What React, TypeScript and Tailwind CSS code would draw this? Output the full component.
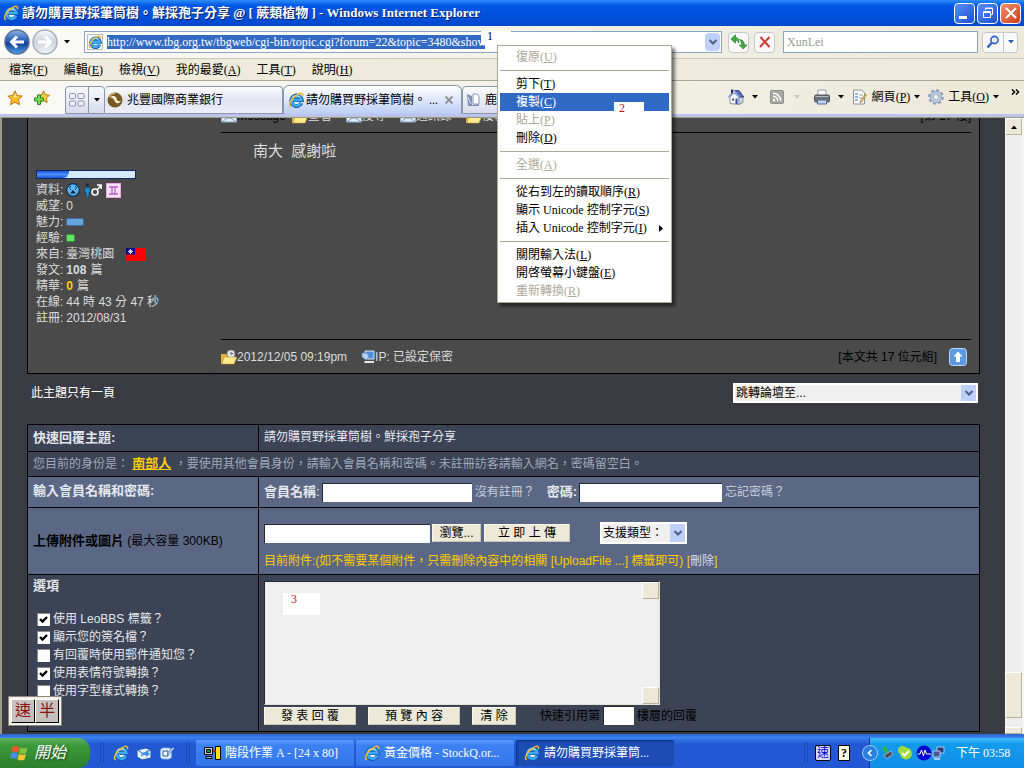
import type { ReactNode } from 'react'
import clsx from 'clsx'

const serif = "font-['Liberation_Serif','Noto_Sans_CJK_TC',serif]"
const sans = "font-['Liberation_Sans','Noto_Sans_CJK_TC',sans-serif]"

/* ---------- icons ---------- */

function IeIcon({ className = 'w-4 h-4' }: { className?: string }) {
  return (
    <svg viewBox="0 0 16 16" className={clsx('shrink-0', className)} fill="none">
      <circle cx="8.300" cy="8.500" r="4" fill="#e9f6ff" />
      <path d="M13.300 11a5.200 5.200 0 1 1 .4-3H4" stroke="#135aa8" strokeWidth="4" />
      <path d="M13 10.800a5 5 0 1 1 .4-2.800H4" stroke="#3fa9f2" strokeWidth="2.600" />
      <path d="M4.500 5.500C6 3.800 9.500 3 11.500 5" stroke="#a5e0ff" strokeWidth="1.200" />
      <path d="M3 14.800C-.8 14 3 6.500 9 2.800c3.600-2.200 6.600-2 5.400 1.400" stroke="#f5b92e" strokeWidth="1.500" />
    </svg>
  )
}

function DownArrow({ className = 'text-black' }: { className?: string }) {
  return (
    <svg viewBox="0 0 6 4" className={clsx('w-1.5 h-1 shrink-0', className)}>
      <path d="M0 0h6L3 3.500z" fill="currentColor" />
    </svg>
  )
}

function Chevron() {
  return (
    <svg viewBox="0 0 10 8" className="w-2.5 h-2" fill="none">
      <path d="M1.500 2 5 5.500 8.500 2" stroke="#4d6185" strokeWidth="2" />
    </svg>
  )
}

function NavIcon({ forward = false }: { forward?: boolean }) {
  return (
    <svg viewBox="0 0 26 26" className="w-[26px] h-[26px]">
      <defs>
        <linearGradient id="navBlue" x1="0" y1="0" x2="0" y2="1">
          <stop offset="0" stopColor="#8fb4e6" />
          <stop offset=".45" stopColor="#2a5db4" />
          <stop offset=".55" stopColor="#123d90" />
          <stop offset="1" stopColor="#4fa3ea" />
        </linearGradient>
        <linearGradient id="navGray" x1="0" y1="0" x2="0" y2="1">
          <stop offset="0" stopColor="#f7f8fa" />
          <stop offset=".5" stopColor="#cdd2da" />
          <stop offset="1" stopColor="#f3f5f8" />
        </linearGradient>
      </defs>
      <circle cx="13" cy="13" r="12" fill={forward ? 'url(#navGray)' : 'url(#navBlue)'} stroke={forward ? '#a9afb9' : '#5b6f96'} strokeWidth="1.500" />
      {forward
        ? <path d="M6 13h12M13 7.500l5.500 5.500-5.500 5.500" stroke="#fff" strokeWidth="3" fill="none" />
        : <path d="M20 13H8M13 7.500 7.500 13l5.500 5.500" stroke="#fff" strokeWidth="3" fill="none" />}
    </svg>
  )
}

function StarIcon() {
  return (
    <svg viewBox="0 0 16 16" className="w-4 h-4">
      <path d="m8 .8 2.200 4.700 5 .6-3.700 3.500 1 5.200L8 12.200l-4.500 2.600 1-5.200L.8 6.100l5-.6z" fill="#fbb92c" stroke="#c07a12" />
      <path d="m8 3 1.200 3.300 3 .4-5.700 1z" fill="#ffe48a" />
    </svg>
  )
}

function AddStarIcon() {
  return (
    <svg viewBox="0 0 16 16" className="w-4 h-4">
      <path d="m9.500.8 1.900 3.900 4 .5-3 3 .8 4.300-3.700-2-3.800 2 .9-4.300-2.800-3 4-.5z" fill="#fbc93c" stroke="#c07a12" />
      <path d="M3.500 5h3v3h3v3h-3v3.500h-3V11h-3V8h3z" fill="#7ddb5a" stroke="#238a1b" />
    </svg>
  )
}

function TabsIcon() {
  return (
    <svg viewBox="0 0 16 14" className="w-4 h-3.5" fill="#eef0fb" stroke="#8e93a8">
      <rect x=".5" y=".5" width="6" height="5" rx="1" />
      <rect x="9" y=".5" width="6" height="5" rx="1" />
      <rect x=".5" y="8" width="6" height="5" rx="1" />
      <rect x="9" y="8" width="6" height="5" rx="1" />
    </svg>
  )
}

function BankIcon() {
  return (
    <svg viewBox="0 0 16 16" className="w-4 h-4 shrink-0">
      <circle cx="8" cy="8" r="7.500" fill="#7a5a22" />
      <path d="M3 5.500C6 3 9 4 9.500 6.500S12 10 14 8.500c-1 3.500-5 3.500-6 1S5.500 5.500 3 5.500z" fill="#f8f0dc" />
      <path d="M2 5A7 7 0 0 1 8 1.200" stroke="#d8b465" strokeWidth="1.500" fill="none" />
    </svg>
  )
}

function NoteIcon() {
  return (
    <svg viewBox="0 0 16 16" className="w-4 h-4 shrink-0">
      <path d="M2 2l5 2v9l7-1v2H3z" fill="#7d90b5" />
      <path d="M8 2h4l2 2v8H8z" fill="#fff" stroke="#8a97b8" />
      <path d="M3 5l3 7" stroke="#dfe6f5" />
    </svg>
  )
}

function HomeIcon() {
  return (
    <svg viewBox="0 0 16 16" className="w-4 h-4">
      <path d="M2 8v6.500l9 1V8L6 4z" fill="#f4f6fb" stroke="#6f7b98" strokeWidth=".8" />
      <path d="M11 8h4v5.500l-4 2z" fill="#cdd6ee" stroke="#6f7b98" strokeWidth=".8" />
      <path d="M6 1.500h5L15.800 8h-4.600z" fill="#5a6fc0" stroke="#26346f" strokeWidth=".8" />
      <path d="M.5 8.500 6 1.500l5.500 7" stroke="#8fa3da" strokeWidth="1.600" fill="none" />
      <path d="M3 .5h2v3l-2 1.500z" fill="#2b2f58" />
      <path d="M4 9.500h2v2H4zM7.500 9.500h2v5.500h-2z" fill="#35489a" />
    </svg>
  )
}

function FeedIcon() {
  return (
    <svg viewBox="0 0 14 14" className="w-3.5 h-3.5" fill="none">
      <rect x=".5" y=".5" width="13" height="13" rx="1" fill="#a8a8a2" stroke="#92928c" />
      <circle cx="4" cy="10" r="1.300" fill="#fff" />
      <path d="M3 6.200A4.800 4.800 0 0 1 7.800 11M3 3.200A7.800 7.800 0 0 1 10.800 11" stroke="#fff" strokeWidth="1.400" />
    </svg>
  )
}

function PrinterIcon() {
  return (
    <svg viewBox="0 0 16 16" className="w-4 h-4">
      <path d="M4 1h8v6H4z" fill="#fff" stroke="#9a9ea8" />
      <rect x=".5" y="6" width="15" height="7" rx="1.500" fill="#6d717a" stroke="#4b4e58" />
      <path d="M1.500 7.500h13" stroke="#b5b9c2" />
      <path d="M3.500 11h9v4h-9z" fill="#bcd5f5" stroke="#5a6a88" />
    </svg>
  )
}

function PageIcon() {
  return (
    <svg viewBox="0 0 16 16" className="w-4 h-4">
      <path d="M1.500 1h8l3 3v11h-11z" fill="#fff" stroke="#8a8f9c" />
      <path d="M3 5h3M3 8h3M3 11h3" stroke="#6a9bd8" strokeWidth="1.500" />
      <path d="M7 6h4M7 9h3" stroke="#999" />
      <path d="m14.500 6-5 7-1.500 1 .3-2 5-7z" fill="#f1c75c" stroke="#7d6330" strokeWidth=".6" />
    </svg>
  )
}

function GearIcon() {
  return (
    <svg viewBox="0 0 16 16" className="w-4 h-4" fill="none">
      <circle cx="8" cy="8" r="6.800" stroke="#8ba0bb" strokeWidth="2" strokeDasharray="3 2.340" />
      <circle cx="8" cy="8" r="4.500" stroke="#b7c9de" strokeWidth="3" />
      <circle cx="8" cy="8" r="5.800" stroke="#8298b6" strokeWidth=".7" />
      <circle cx="8" cy="8" r="2.600" fill="#f4f3ea" stroke="#8298b6" strokeWidth=".7" />
    </svg>
  )
}

function RefreshIcon() {
  return (
    <svg viewBox="0 0 16 16" className="w-4 h-4">
      <path d="M0 5 4.500.8V3.500C7 3.500 8 5 7.800 9c-.6-2-1.500-2.500-3.300-2.500v2.700z" fill="#3fae3f" stroke="#1f7d25" strokeWidth=".7" />
      <path d="M8.500 11h2.300C10.800 8.500 10 7 8.600 5.500c3 .5 4.700 2 4.700 5.500H16l-3.800 4z" fill="#3fae3f" stroke="#1f7d25" strokeWidth=".7" />
    </svg>
  )
}

function PersonIcon() {
  return (
    <svg viewBox="0 0 18 14" className="w-[18px] h-3.5" fill="none">
      <circle cx="3.500" cy="2" r="1.700" fill="#20262e" />
      <path d="M.8 4.500h5.400v5H5V14H2V9.500H.8z" fill="#1f8bd0" stroke="#0c3557" strokeWidth=".6" />
      <circle cx="11" cy="9" r="3" stroke="#fff" strokeWidth="1.600" />
      <path d="m13 7 4-4.500M13 2h4.200v4" stroke="#fff" strokeWidth="1.500" />
    </svg>
  )
}

function MoodIcon() {
  return (
    <svg viewBox="0 0 14 14" className="w-3.5 h-3.5">
      <circle cx="7" cy="7" r="6.300" fill="#5ab6f2" stroke="#0c2f55" strokeWidth="1.200" />
      <path d="M4 10.500 7 7l3 3.500z" fill="#0c2035" />
      <path d="m3 5 2-1.500M11 5 9 3.500M4 6.500h1M9 6.500h1" stroke="#0c2035" />
    </svg>
  )
}

function GeminiIcon() {
  return (
    <svg viewBox="0 0 15 15" className="w-[15px] h-[15px]">
      <rect x=".5" y=".5" width="14" height="14" fill="#fbe4fb" stroke="#f3a6ee" />
      <path d="M3 4h9M3 11h9M6 4v7M9 4v7" stroke="#b85bc4" strokeWidth="1.300" />
    </svg>
  )
}

function FlagIcon() {
  return (
    <svg viewBox="0 0 20 13" className="w-5 h-[13px]">
      <path d="M0 0h20v13H0z" fill="#f00" />
      <path d="M0 0h9v6.500H0z" fill="#000a8c" />
      <path d="M4.500 1v5M2 3.500h5M2.800 1.800l3.400 3.400M6.200 1.800 2.800 5.200" stroke="#fff" strokeWidth=".8" />
    </svg>
  )
}

function FolderIcon() {
  return (
    <svg viewBox="0 0 16 16" className="w-4 h-4 shrink-0">
      <path d="M0 5h5l1 1h7v9H0z" fill="#e0b23f" />
      <circle cx="10" cy="5" r="4" fill="#dfe4ea" stroke="#8f97a2" />
      <path d="M10 3v2.300l2-1" stroke="#555" fill="none" />
      <path d="M3 8h13l-3 7H1z" fill="#fde98e" stroke="#c9992a" strokeWidth=".6" />
    </svg>
  )
}

function ComputerIcon() {
  return (
    <svg viewBox="0 0 14 14" className="w-3.5 h-3.5 shrink-0">
      <path d="M4 1h9v8H4z" fill="#4d8fe0" stroke="#dce8f7" />
      <path d="M1 3h5l2 4-3 3-4-3z" fill="#b8d4f4" stroke="#5b7fae" strokeWidth=".7" />
      <path d="M4 11h9v2H3z" fill="#e2e5ea" />
    </svg>
  )
}

// letter-style icon of the post toolbar
function CardIcon() {
  return (
    <svg viewBox="0 0 16 16" className="w-4 h-4 shrink-0">
      <path d="M.5 5h15v9H.5z" fill="#e3ecf8" stroke="#8fa9cf" />
      <path d="m1 14 5-4h4l5 4" stroke="#6d8fc4" fill="none" />
    </svg>
  )
}

function UpIcon() {
  return (
    <svg viewBox="0 0 18 18" className="w-[18px] h-[18px]">
      <rect x=".5" y=".5" width="17" height="17" rx="3" fill="#5b9ae0" stroke="#b9d6f6" />
      <path d="m9 3.500 4.500 5h-2.500V14H7V8.500H4.500z" fill="#fff" />
    </svg>
  )
}

function WindowsFlag() {
  return (
    <svg viewBox="0 0 20 18" className="w-5 h-[18px]">
      <path d="M2.500 3C5 1.500 7 1.800 9.300 3L8 8.500C5.800 7.300 3.500 7.200 1.200 8.500z" fill="#ef5a28" />
      <path d="M10.300 3.400c2.500 1.200 4.700 1.200 7.200 0l-1.400 5.500c-2.400 1.200-4.600 1.200-7.100 0z" fill="#84c341" />
      <path d="M1 9.500c2.400-1.300 4.500-1.200 6.800 0L6.500 15c-2.300-1.200-4.400-1.200-6.500 0z" fill="#4a8df0" />
      <path d="M8.800 9.900c2.400 1.200 4.700 1.200 7.100 0l-1.400 5.500c-2.500 1.200-4.600 1.200-7 0z" fill="#fbc62d" />
    </svg>
  )
}

function MailIcon() {
  return (
    <svg viewBox="0 0 16 16" className="w-4 h-4">
      <path d="m1 5 9-2 5 2v8l-9 2-5-3z" fill="#e8f1fb" stroke="#1c57ae" />
      <path d="m2 5 5 4 7-4" stroke="#1c57ae" fill="none" />
      <path d="M5 12c0-4 2-5 5-5V5l4 4-4 3v-2c-2 0-4 0-5 2z" fill="#3f93e8" />
    </svg>
  )
}

function DesktopIcon() {
  return (
    <svg viewBox="0 0 16 16" className="w-4 h-4">
      <rect x="1.500" y="3" width="11" height="11" rx="3" fill="#e8f1fb" stroke="#7eb4ea" />
      <path d="M4 6h5v5H4z" fill="#fff" stroke="#1c57ae" />
      <path d="m8 9 6-7 1.500 1.500-6 6.500z" fill="#cfd9e8" stroke="#1c57ae" strokeWidth=".7" />
    </svg>
  )
}

function TerminalIcon() {
  return (
    <svg viewBox="0 0 17 14" className="w-[17px] h-3.5 shrink-0">
      <path d="M.5 1.500h8v7h-8z" fill="#d8d8d8" stroke="#000" />
      <path d="M2.500 3.500h4v3h-4z" fill="#0a9a3a" stroke="#000" />
      <path d="M2 10.500h6v2H2z" fill="#bbb" stroke="#000" />
      <path d="M11.500.5h5v13h-5z" fill="#ffe100" stroke="#000" />
      <path d="M9 5h3" stroke="#e00" strokeWidth="1.500" />
    </svg>
  )
}

/* ---------- browser chrome ---------- */

function TitleBar() {
  return (
    <header className="flex h-[26px] shrink-0 items-center gap-[3px] bg-linear-to-b from-[#2f8dfb] via-[#0058e6] via-20% to-[#0048cf] px-[3px]">
      <IeIcon />
      <h1 className="flex-1 truncate text-[13px] leading-5 font-bold text-white [text-shadow:1px_1px_#0a1f66]">
        請勿購買野採筆筒樹。鮮採孢子分享 @ [ 蕨類植物 ] - Windows Internet Explorer
      </h1>
      <div className="flex gap-0.5">
        <button aria-label="最小化" className="flex h-[21px] w-[21px] items-end rounded-sm border border-white bg-linear-to-br from-[#5b8cf5] to-[#1a4fd4] p-1">
          <span className="h-[3px] w-2 bg-white" />
        </button>
        <button aria-label="還原" className="flex h-[21px] w-[21px] items-center justify-center rounded-sm border border-white bg-linear-to-br from-[#5b8cf5] to-[#1a4fd4]">
          <svg viewBox="0 0 12 12" className="w-3 h-3" fill="none" stroke="#fff">
            <path d="M3.500 3V1.500h7v6H9M3.500 1h7" />
            <path d="M1.500 4.500h7v6h-7zM1.500 5.500h7" />
          </svg>
        </button>
        <button aria-label="關閉" className="flex h-[21px] w-[21px] items-center justify-center rounded-sm border border-white bg-linear-to-br from-[#f09070] to-[#cc3a10]">
          <svg viewBox="0 0 12 12" className="w-3 h-3"><path d="m1 1 10 10M11 1 1 11" stroke="#fff" strokeWidth="2" /></svg>
        </button>
      </div>
    </header>
  )
}

function ToolButton({ label, children, className = 'w-[21px] rounded-sm' }: { label: string; children: ReactNode; className?: string }) {
  return (
    <button aria-label={label} className={clsx('flex h-[21px] items-center justify-center border border-[#c3c6cf] bg-[#f9f9f8]', className)}>
      {children}
    </button>
  )
}

function NavRow() {
  return (
    <div className="flex h-8 shrink-0 items-center bg-linear-to-r from-[#fafaf8] to-[#ece9d8] pr-1.5 pl-1">
      <button aria-label="上一頁"><NavIcon /></button>
      <button aria-label="下一頁" className="ml-0.5"><NavIcon forward /></button>
      <button aria-label="最近的網頁" className="mr-3.5 ml-1.5"><DownArrow className="text-black" /></button>
      <div className="flex h-[22px] flex-1 items-center border border-[#8ba3c4] bg-white pr-px pl-0.5">
        <span className="mr-1 flex h-4 w-4 items-center justify-center border border-[#bbb] bg-white">
          <IeIcon className="w-3.5 h-3.5" />
        </span>
        <input
          aria-label="網址"
          className="h-3.5 w-[378px] bg-[#316ac5] text-xs leading-3.5 text-white outline-none"
          defaultValue="http://www.tbg.org.tw/tbgweb/cgi-bin/topic.cgi?forum=22&topic=3480&show=0"
        />
        <button aria-label="顯示網址清單" className="ml-auto flex h-[18px] w-[15px] items-center justify-center rounded-sm bg-[#bfd0f8]">
          <Chevron />
        </button>
      </div>
      <div className="mx-1.5 flex gap-[5px]">
        <ToolButton label="重新整理"><RefreshIcon /></ToolButton>
        <ToolButton label="停止">
          <svg viewBox="0 0 12 12" className="w-3 h-3"><path d="m1.500 1 9 10M10.500 1 1 11" stroke="#cc3a33" strokeWidth="2" /></svg>
        </ToolButton>
      </div>
      <input
        aria-label="搜尋"
        placeholder="XunLei"
        className="ml-0.5 h-[22px] w-[195px] border border-[#8ba3c4] bg-white px-[3px] text-xs text-gray-500 outline-none placeholder:text-[#999]"
      />
      <div className="ml-1 flex">
        <ToolButton label="搜尋" className="w-[22px] rounded-l-sm">
          <svg viewBox="0 0 14 14" className="w-3.5 h-3.5" fill="none">
            <path d="m1.500 12.500 4-4.500" stroke="#2b5fc0" strokeWidth="2.500" />
            <circle cx="8.500" cy="5" r="3.600" fill="#e6f0ff" stroke="#2b5fc0" strokeWidth="1.600" />
          </svg>
        </ToolButton>
        <ToolButton label="搜尋選項" className="w-3.5 rounded-r-sm border-l-0"><DownArrow className="text-[#2b5fc0]" /></ToolButton>
      </div>
    </div>
  )
}

// "檔案(F)" with the access key underlined
function KeyLabel({ text, k }: { text: string; k: string }) {
  return <>{text}(<u>{k}</u>)</>
}

const menus = [
  ['檔案', 'F'],
  ['編輯', 'E'],
  ['檢視', 'V'],
  ['我的最愛', 'A'],
  ['工具', 'T'],
  ['說明', 'H'],
]

function MenuRow() {
  return (
    <nav className="flex h-[23px] shrink-0 items-center gap-4 border-t border-b border-t-[#c9c7b8] border-b-[#aaa897] bg-[#eeebdd] px-[9px] text-xs leading-4">
      {menus.map(([text, k]) => (
        <button key={k}><KeyLabel text={text} k={k} /></button>
      ))}
    </nav>
  )
}

function TabRow() {
  return (
    <div className="flex h-[37px] shrink-0 items-start justify-between border-b border-[#9a9a78] bg-linear-to-r from-[#f9f9f6] to-[#ece9d8] text-xs leading-4 shadow-[inset_0_-3px_#bcc4ee]">
      <div className="flex items-end">
        <button aria-label="我的最愛" className="ml-[7px] self-center"><StarIcon /></button>
        <button aria-label="加到我的最愛" className="mr-[15px] ml-[11px] self-center"><AddStarIcon /></button>
        <div className="mt-[5px] flex h-7 rounded-t border border-[#8f95a8] bg-linear-to-b from-[#f8f8fb] to-[#d9dced]">
          <button aria-label="快速索引標籤" className="flex w-[22px] items-center justify-center"><TabsIcon /></button>
          <button aria-label="索引標籤清單" className="flex w-4 items-center justify-center border-l border-[#8f95a8]"><DownArrow /></button>
        </div>
        <button className="flex h-7 w-[178px] items-center gap-1 rounded-t border border-l-0 border-[#8f95a8] bg-linear-to-b from-[#fcfcfd] via-[#e2e4f0] to-[#eceef8] pl-0.5">
          <BankIcon />兆豐國際商業銀行
        </button>
        <div className="flex h-[29px] w-[179px] items-center gap-0.5 rounded-t-md border border-b-0 border-[#8f95a8] bg-linear-to-b from-white to-[#bccdf5] px-1">
          <IeIcon />
          <button className="flex-1 truncate text-left">請勿購買野採筆筒樹。 ...</button>
          <button aria-label="關閉索引標籤" className="p-1">
            <svg viewBox="0 0 8 8" className="w-2 h-2"><path d="m.5.5 7 7M7.500.5l-7 7" stroke="#8b8b8b" strokeWidth="1.800" /></svg>
          </button>
        </div>
        <button className="flex h-7 w-20 items-center gap-1 rounded-t border border-[#8f95a8] bg-linear-to-b from-[#fcfcfd] to-[#d9dced] pl-0.5">
          <NoteIcon />鹿
        </button>
      </div>
      <div className="flex items-center pt-2 pr-1">
        <button aria-label="首頁"><HomeIcon /></button>
        <button aria-label="首頁選項" className="ml-2"><DownArrow /></button>
        <button aria-label="摘要" className="ml-3"><FeedIcon /></button>
        <button aria-label="摘要選項" className="ml-2.5"><DownArrow className="text-[#c4c2b6]" /></button>
        <button aria-label="列印" className="ml-3.5"><PrinterIcon /></button>
        <button aria-label="列印選項" className="ml-2"><DownArrow /></button>
        <button className="ml-2 flex items-center gap-1"><PageIcon /><span><KeyLabel text="網頁" k="P" /></span><DownArrow /></button>
        <button className="mr-3 ml-2 flex items-center gap-1"><GearIcon /><span><KeyLabel text="工具" k="O" /></span><DownArrow /></button>
        <button aria-label="更多" className="self-start">
          <svg viewBox="0 0 9 6" className="w-[9px] h-1.5" fill="none"><path d="m1 .5 2.500 2.500L1 5.500M5 .5 7.500 3 5 5.500" stroke="#000" strokeWidth="1.500" /></svg>
        </button>
      </div>
    </div>
  )
}

/* ---------- forum page ---------- */

function Stat({ label, children }: { label: string; children: ReactNode }) {
  return (
    <div className="flex h-4 items-center gap-[3px]">
      <dt>{label}:</dt>
      <dd className="flex items-center gap-1">{children}</dd>
    </div>
  )
}

function Post() {
  return (
    <article className="flex h-64 border border-t-0 border-black bg-[#4a4a4a] text-xs text-[#dcdcdc]">
      <div className="w-[185px] shrink-0 border-r border-[#45474b] pt-[52px] pl-2">
        <div className="mb-[3px] h-[9px] w-[100px] border border-[#10295c] bg-[#d6e8fc]">
          <div className="h-full w-8 rounded-br-md bg-linear-to-b from-[#1c54d8] via-[#4b92ff] to-[#1c54d8]" />
        </div>
        <dl className="leading-4">
          <Stat label="資料"><MoodIcon /><PersonIcon /><GeminiIcon /></Stat>
          <Stat label="威望">0</Stat>
          <Stat label="魅力"><span className="h-2 w-[18px] rounded-xs border border-[#3c6eaa] bg-[#68a2dc]" /></Stat>
          <Stat label="經驗"><span className="h-2 w-[9px] rounded-xs border border-[#2c9a37] bg-[#6ce070]" /></Stat>
          <Stat label="來自">臺灣桃園<span className="ml-2"><FlagIcon /></span></Stat>
          <Stat label="發文"><b>108</b>篇</Stat>
          <Stat label="精華"><b className="text-[#ffcc00]">0</b>篇</Stat>
          <Stat label="在線">44 時 43 分 47 秒</Stat>
          <Stat label="註冊">2012/08/31</Stat>
        </dl>
      </div>
      <div className="flex flex-1 flex-col px-2">
        {/* toolbar is scrolled half out of view */}
        <div className="-mt-2.5 flex h-4 items-center gap-3.5 leading-4">
          <a href="#message" className="flex items-center text-black"><CardIcon />Message</a>
          <a href="#view" className="-ml-2 flex items-center"><FolderIcon />查看</a>
          <a href="#search" className="flex items-center"><CardIcon />搜尋</a>
          <a href="#contacts" className="flex items-center"><CardIcon />通訊錄</a>
          <a href="#copy" className="flex items-center"><FolderIcon />複製</a>
          <span className="ml-auto text-black">[第 17 樓]</span>
        </div>
        <hr className="mt-2 border-black" />
        <p className="flex-1 px-8 pt-2 text-[15px] leading-5">南大&nbsp; 感謝啦</p>
        <hr className="border-black" />
        <footer className="flex h-[33px] items-center leading-4">
          <FolderIcon />2012/12/05 09:19pm
          <span className="ml-3.5 flex items-center"><ComputerIcon />IP: 已設定保密</span>
          <span className="ml-auto text-black">[本文共 17 位元組]</span>
          <button aria-label="回到頂端" className="mr-1 ml-3"><UpIcon /></button>
        </footer>
      </div>
    </article>
  )
}

function Dropdown({ label, option, className }: { label: string; option: string; className: string }) {
  return (
    <div className={clsx('relative', className)}>
      <select aria-label={label} className="h-full w-full appearance-none border-2 border-white bg-[#efefef] px-px text-xs leading-4 text-black outline-none">
        <option>{option}</option>
      </select>
      <span className="pointer-events-none absolute top-0.5 right-0.5 bottom-0.5 flex w-[15px] items-center justify-center bg-[#bfd0f8]">
        <Chevron />
      </span>
    </div>
  )
}

function FormButton({ children, className }: { children: ReactNode; className: string }) {
  return (
    <button type="button" className={clsx('h-[18px] border border-t-[#f8f7f0] border-r-[#c8c6b4] border-b-[#c8c6b4] border-l-[#f8f7f0] bg-[#ece9d8] text-xs leading-4 text-black', className)}>
      {children}
    </button>
  )
}

function TextBox({ id, type = 'text', className }: { id: string; type?: string; className: string }) {
  return <input id={id} type={type} className={clsx('h-[19px] border-t border-l border-[#26292f] bg-white px-1 text-xs text-black outline-none', className)} />
}

const options = [
  { text: '使用 LeoBBS 標籤？', checked: true },
  { text: '顯示您的簽名檔？', checked: true },
  { text: '有回覆時使用郵件通知您？', checked: false },
  { text: '使用表情符號轉換？', checked: true },
  { text: '使用字型樣式轉換？', checked: false },
]

function Option({ text, checked }: { text: string; checked: boolean }) {
  return (
    <label className="flex h-[18px] items-center gap-[3px] leading-4">
      <span className="grid">
        <input type="checkbox" defaultChecked={checked} className="peer col-start-1 row-start-1 h-[13px] w-[13px] appearance-none border-t border-l border-[#8c8c8c] bg-white" />
        <svg viewBox="0 0 13 13" className="pointer-events-none invisible col-start-1 row-start-1 h-[13px] w-[13px] peer-checked:visible">
          <path d="m3 6 2.500 2.500L10 4" stroke="#000" strokeWidth="2.400" fill="none" />
        </svg>
      </span>
      {text}
    </label>
  )
}

const cell = 'w-[231px] shrink-0 border-r border-black px-[5px]'

function ReplyForm() {
  return (
    <form className="mt-[21px] border border-black bg-[#3b4355] text-xs leading-4 text-[#e4e7ec]">
      <div className="flex h-[27px] border-b border-black">
        <div className={clsx(cell, 'pt-[5px] text-[13px] font-bold')}>快速回覆主題:</div>
        <div className="px-[5px] pt-1">請勿購買野採筆筒樹。鮮採孢子分享</div>
      </div>
      <p className="h-[25px] border-b border-black px-[5px] pt-1 text-[#9fa9bd]">
        您目前的身份是： <a href="#user" className="text-[13px] font-bold text-[#ffcc00] underline">南部人</a> ，要使用其他會員身份，請輸入會員名稱和密碼。未註冊訪客請輸入網名，密碼留空白。
      </p>
      <div className="flex h-[31px] border-b border-black bg-[#5b6885]">
        <div className={clsx(cell, 'pt-1.5 text-[13px] font-bold')}>輸入會員名稱和密碼:</div>
        <div className="flex items-center px-[5px]">
          <label htmlFor="member" className="text-[13px]"><b>會員名稱</b>:</label>
          <TextBox id="member" className="ml-0.5 w-[150px]" />
          <a href="#register" className="ml-[3px] text-[#c6cedb]">沒有註冊？</a>
          <label htmlFor="password" className="ml-3 text-[13px] font-bold">密碼:</label>
          <TextBox id="password" type="password" className="ml-0.5 w-[143px]" />
          <a href="#forgot" className="ml-[3px] text-[#c6cedb]">忘記密碼？</a>
        </div>
      </div>
      <div className="flex h-[67px] border-b border-black bg-[#5b6885]">
        <label htmlFor="upload" className={clsx(cell, 'flex items-center text-black')}>
          <span><b className="text-[13px]">上傳附件或圖片</b> (最大容量 300KB)</span>
        </label>
        <div className="px-[5px] pt-3.5">
          <div className="flex h-[22px] items-center">
            <TextBox id="upload" className="mr-0.5 w-[166px]" />
            <FormButton className="mr-[3px] w-[49px]">瀏覽...</FormButton>
            <FormButton className="w-[86px]">立 即 上 傳</FormButton>
            <Dropdown label="支援類型" option="支援類型：" className="ml-[30px] h-[22px] w-[87px]" />
          </div>
          <p className="mt-[9px] text-[#ffcc00]">
            目前附件:(如不需要某個附件，只需刪除內容中的相關 [UploadFile ...] 標籤即可) [<a href="#delete" className="text-[#d5dae4]">刪除</a>]
          </p>
        </div>
      </div>
      <div className="flex h-[156px]">
        <fieldset className={clsx(cell, 'pt-[3px]')}>
          <legend className="float-left w-full text-[13px] font-bold">選項</legend>
          <div className="clear-both pt-4 pl-1">
            {options.map(option => <Option key={option.text} {...option} />)}
          </div>
        </fieldset>
        <div className="px-[5px] pt-1.5">
          <div className="flex h-[124px] w-[396px] border border-t-[#26292f] border-r-[#e4e2d4] border-b-[#e4e2d4] border-l-[#26292f] bg-[#efefef]">
            <textarea aria-label="回覆內容" className="flex-1 resize-none bg-[#efefef] p-1 text-black outline-none" />
            <div className="flex w-[17px] flex-col justify-between">
              <button type="button" aria-label="向上捲動" className="h-[17px] border border-t-white border-r-[#b5b29c] border-b-[#b5b29c] border-l-white bg-[#ece9d8]" />
              <button type="button" aria-label="向下捲動" className="h-[17px] border border-t-white border-r-[#b5b29c] border-b-[#b5b29c] border-l-white bg-[#ece9d8]" />
            </div>
          </div>
          <div className="mt-px flex items-center text-black">
            <FormButton className="mr-3 w-[92px]">發 表 回 覆</FormButton>
            <FormButton className="mr-3 w-[92px]">預 覽 內 容</FormButton>
            <FormButton className="w-11">清 除</FormButton>
            <label htmlFor="floor" className="ml-6">快速引用第</label>
            <TextBox id="floor" className="mx-[3px] w-[31px]" />
            樓層的回覆
          </div>
        </div>
      </div>
    </form>
  )
}

function PageScrollbar() {
  const face = 'w-[17px] border border-t-white border-r-[#b5b29c] border-b-[#b5b29c] border-l-white bg-[#ece9d8]'
  return (
    <div className="flex w-[19px] shrink-0 flex-col border-r-2 border-[#f6f5ef] bg-[#eeeeee]">
      <button aria-label="向上捲動" className={clsx(face, 'flex h-[17px] items-center justify-center')}>
        <DownArrow className="rotate-180 text-black" />
      </button>
      <div className={clsx(face, 'mt-auto h-[46px]')} />
      <button aria-label="向下捲動" className={clsx(face, 'mt-[9px] h-[7px]')} />
    </div>
  )
}

/* ---------- context menu ---------- */

interface MenuEntry { text: string; k: string; off?: boolean; active?: boolean; sub?: boolean }

const groups: MenuEntry[][] = [
  [{ text: '復原', k: 'U', off: true }],
  [
    { text: '剪下', k: 'T' },
    { text: '複製', k: 'C', active: true },
    { text: '貼上', k: 'P', off: true },
    { text: '刪除', k: 'D' },
  ],
  [{ text: '全選', k: 'A', off: true }],
  [
    { text: '從右到左的讀取順序', k: 'R' },
    { text: '顯示 Unicode 控制字元', k: 'S' },
    { text: '插入 Unicode 控制字元', k: 'I', sub: true },
  ],
  [
    { text: '關閉輸入法', k: 'L' },
    { text: '開啓螢幕小鍵盤', k: 'E' },
    { text: '重新轉換', k: 'R', off: true },
  ],
]

function ContextMenu() {
  return (
    <div role="menu" className="absolute top-[45px] left-[497px] w-[175px] border border-[#aca899] bg-white p-0.5 text-xs leading-[18px] shadow-[3px_3px_3px_rgba(0,0,0,0.5)]">
      {groups.map((group, i) => (
        <div key={i}>
          {i > 0 && <hr className="my-1 border-[#aca899]" />}
          {group.map(item => (
            <button
              key={item.text}
              role="menuitem"
              disabled={item.off}
              className={clsx(
                'flex h-[18px] w-full items-center justify-between pr-1.5 pl-4 text-left',
                item.off && 'text-[#aca899]',
                item.active && 'bg-[#316ac5] text-white',
              )}
            >
              <span><KeyLabel text={item.text} k={item.k} /></span>
              {item.sub && <svg viewBox="0 0 4 7" className="w-1 h-[7px]"><path d="M0 0v7l4-3.500z" /></svg>}
            </button>
          ))}
        </div>
      ))}
    </div>
  )
}

/* ---------- taskbar ---------- */

function Grip() {
  return <span className="h-5 w-1 border-x border-dotted border-[#123f9f]" />
}

function TaskButton({ icon, text, active = false }: { icon: ReactNode; text: string; active?: boolean }) {
  return (
    <button
      className={clsx(
        'flex h-[26px] w-[158px] items-center gap-1 rounded-xs px-2 text-xs text-white',
        active ? 'bg-[#1c4cb4] shadow-[inset_1px_1px_2px_#0d2f7c]' : 'bg-linear-to-b from-[#5c9cff] via-[#3c81f3] via-20% to-[#3476ea]',
      )}
    >
      {icon}
      <span className="truncate">{text}</span>
    </button>
  )
}

function Taskbar() {
  return (
    <footer className="flex h-[34px] shrink-0 items-end bg-linear-to-b from-[#2b62cc] via-[#3a80ee] via-10% to-[#2258d3] to-30%">
      <button className="flex h-[30px] w-[90px] items-center gap-1 rounded-r-xl bg-linear-to-b from-[#5fb25c] via-[#3a9a3a] via-25% to-[#2c7f2b] pl-2.5 text-base text-white italic [text-shadow:1px_1px_2px_#123f12]">
        <WindowsFlag />開始
      </button>
      <div className="ml-2.5 flex h-[30px] items-center gap-[7px]">
        <Grip />
        <button aria-label="Internet Explorer" className="ml-0.5"><IeIcon /></button>
        <button aria-label="Outlook Express"><MailIcon /></button>
        <button aria-label="顯示桌面"><DesktopIcon /></button>
        <span className="ml-1 flex"><Grip /></span>
      </div>
      <div className="ml-1.5 flex h-[30px] items-center gap-0.5">
        <TaskButton icon={<TerminalIcon />} text="階段作業 A - [24 x 80]" />
        <TaskButton icon={<IeIcon />} text="黃金價格 - StockQ.or..." />
        <TaskButton icon={<IeIcon />} text="請勿購買野採筆筒..." active />
      </div>
      <div className="ml-auto flex h-[30px] items-center">
        <Grip />
        <button className="mx-[7px] flex h-4 w-4 items-center justify-center rounded-xs border border-black bg-[#d8dcff] text-xs leading-3 text-[#0000c8]">速</button>
        <button className="mr-[19px] flex h-4 w-3 items-center justify-center border border-black bg-[#fffbe0] text-xs leading-3 font-bold text-black">?</button>
      </div>
      <div className="flex h-[30px] w-[155px] items-center border-l border-[#0b3a94] bg-linear-to-b from-[#3fbdf8] via-[#149bec] via-20% to-[#0f8ee6] text-xs text-white">
        <button aria-label="顯示隱藏的圖示" className="-ml-2 flex h-4 w-4 items-center justify-center rounded-full border border-[#9fd0f8] bg-[#2a7ee0]">
          <svg viewBox="0 0 8 8" className="w-2 h-2" fill="none"><path d="M5.500 1 2.500 4l3 3" stroke="#fff" strokeWidth="1.600" /></svg>
        </button>
        <svg viewBox="0 0 66 16" className="ml-0.5 h-4 w-[66px]" fill="none">
          <path d="m2 3 4-2 2 5-3 3z" fill="#35b04a" />
          <path d="m4 10 7-4 2 3-6 5z" fill="#4a4f57" stroke="#c5ccd5" strokeWidth=".7" />
          <circle cx="26" cy="8.500" r="6" fill="#9edb3c" />
          <circle cx="22.500" cy="5.500" r="4.500" fill="#9edb3c" />
          <path d="m22 8 2.500 2.500L29 6" stroke="#fff" strokeWidth="2" />
          <circle cx="44" cy="8" r="7.500" fill="#0000c8" />
          <path d="M37.500 9h2.500l1.500-4 2 6 1.500-6 1.500 4H51" stroke="#fff" />
          <path d="M57 2h7v6h-7z" fill="#2b3b78" stroke="#b8c4e4" />
          <path d="M53 6h7v6h-7z" fill="#49579a" stroke="#b8c4e4" />
          <path d="M54 14h6" stroke="#d5dcf0" strokeWidth="1.500" />
        </svg>
        <time className="ml-2.5">下午 03:58</time>
      </div>
    </footer>
  )
}

export default function App() {
  return (
    <div className={clsx('relative flex h-screen flex-col overflow-hidden bg-[#ece9d8] text-black', serif)}>
      <TitleBar />
      <NavRow />
      <MenuRow />
      <TabRow />
      <div className="flex min-h-0 flex-1">
        <main className={clsx('min-w-0 flex-1 overflow-hidden border-l-2 border-[#9a9988] bg-[#3a3b42] px-[25px]', sans)}>
          <Post />
          <div className="mt-[9px] flex h-5 items-center justify-between pr-0.5 pl-1 text-xs text-white">
            <span>此主題只有一頁</span>
            <Dropdown label="跳轉論壇" option="跳轉論壇至..." className="h-5 w-[245px]" />
          </div>
          <ReplyForm />
        </main>
        <PageScrollbar />
      </div>
      <Taskbar />

      <ContextMenu />
      {/* step callouts */}
      <div className="absolute top-[30px] left-[481px] h-[15px] w-[30px] bg-white pl-1.5 text-xs leading-3">1</div>
      <div className="absolute top-[102px] left-[614px] h-3 w-[30px] bg-white pl-[5px] text-xs leading-3 text-[#d01020]">2</div>
      <div className="absolute top-[593px] left-[283px] h-[22px] w-[37px] bg-white pl-2 text-xs leading-3 text-[#d01020]">3</div>
      {/* input method bar */}
      <div className="absolute top-[696px] left-2 flex border border-[#8a8a80] bg-[#f4f2e8] p-0.5 text-base leading-5 text-[#8c1010]">
        <button className="h-6 w-6 border border-t-white border-r-black border-b-black border-l-white bg-[#c4c1bd]">速</button>
        <button className="h-6 w-6 border border-t-white border-r-black border-b-black border-l-white bg-[#c4c1bd]">半</button>
      </div>
    </div>
  )
}
